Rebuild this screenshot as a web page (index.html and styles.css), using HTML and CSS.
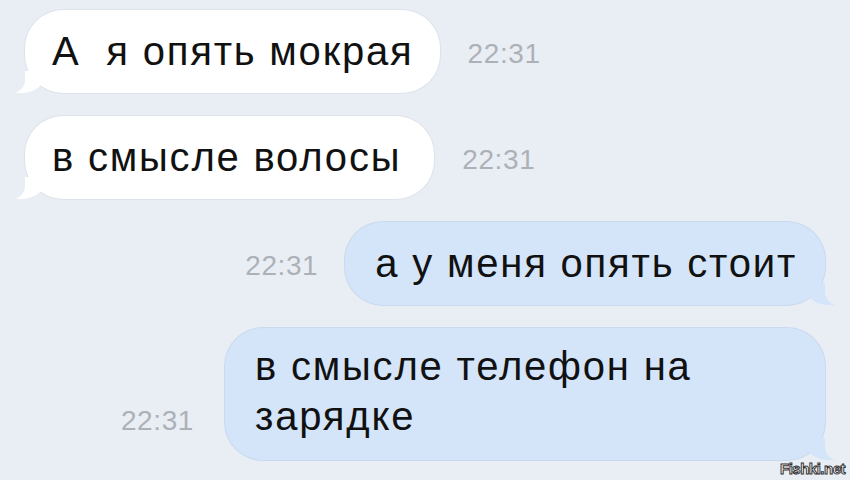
FILE: index.html
```html
<!DOCTYPE html>
<html lang="ru">

<head>
    <meta charset="UTF-8">
    <meta name="viewport" content="width=device-width, initial-scale=1.0">
    <title>Чат</title>
    <link rel="stylesheet" href="styles.css">
</head>

<body>
    <div class="chat">
        <div class="row in">
            <div class="bubble">А&nbsp; я опять мокрая</div>
            <span class="time">22:31</span>
        </div>
        <div class="row in">
            <div class="bubble second">в смысле волосы</div>
            <span class="time">22:31</span>
        </div>
        <div class="row out">
            <span class="time">22:31</span>
            <div class="bubble">а у меня опять стоит</div>
        </div>
        <div class="row out last">
            <span class="time">22:31</span>
            <div class="bubble wide">в смысле телефон на зарядке</div>
        </div>
    </div>
    <div class="mark">Fishki.net</div>
</body>

</html>
```

FILE: styles.css
```css
* {
    margin: 0;
    padding: 0;
    box-sizing: border-box;
}

body {
    width: 850px;
    height: 480px;
    overflow: hidden;
    background: #e9eef5;
    font-family: "Liberation Sans", Arial, sans-serif;
    position: relative;
}

.chat {
    display: flex;
    flex-direction: column;
    gap: 23px;
    padding: 10px 25px 0 25px;
}

.row {
    display: flex;
    align-items: flex-end;
    gap: 28px;
}

.row.out {
    justify-content: flex-end;
    gap: 27px;
}

.row.last {
    gap: 31px;
}

.bubble {
    position: relative;
    font-size: 40px;
    line-height: 50px;
    letter-spacing: 1.8px;
    color: #111;
    padding: 16px 26px 17px 27px;
    border-radius: 38px;
}

.in .bubble {
    background: #fff;
    box-shadow: 0 0 0 1px #dde3ea;
}

.in .second {
    padding-right: 33px;
}

.out .bubble {
    background: #d4e5fa;
    box-shadow: 0 0 0 1px #c9d9ee;
    padding-left: 30px;
    padding-right: 28px;
}

.in .bubble::before,
.out .bubble::before {
    content: "";
    position: absolute;
    bottom: 0;
    width: 34px;
    height: 22px;
}

.in .bubble::before {
    left: -14px;
    background: #fff;
    border-bottom-right-radius: 24px 18px;
}

.out .bubble::before {
    right: -14px;
    background: #d4e5fa;
    border-bottom-left-radius: 24px 18px;
}

.in .bubble::after,
.out .bubble::after {
    content: "";
    position: absolute;
    bottom: -1px;
    width: 16px;
    height: 24px;
    background: #e9eef5;
}

.in .bubble::after {
    left: -16px;
    border-bottom-right-radius: 16px 14px;
}

.out .bubble::after {
    right: -16px;
    border-bottom-left-radius: 16px 14px;
}

.wide {
    width: 600px;
    padding-top: 13px;
    padding-bottom: 19px;
}

.time {
    font-size: 28px;
    line-height: 28px;
    letter-spacing: 0.6px;
    color: #adb1b7;
    padding-bottom: 25px;
}

.mark {
    position: absolute;
    right: 5px;
    bottom: 3px;
    font-size: 15px;
    font-weight: bold;
    color: #fff;
    -webkit-text-stroke: 1px #333;
    letter-spacing: -0.5px;
}
```
